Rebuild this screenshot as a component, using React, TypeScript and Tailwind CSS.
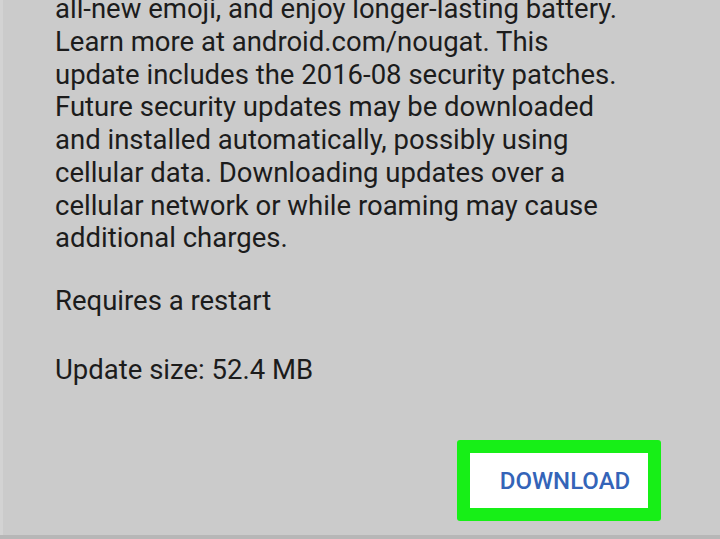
export default function App() {
  return (
    <div className="flex h-[539px] w-[720px] flex-col overflow-hidden bg-[#cbcbcb] font-['Roboto',sans-serif]">
      <div className="flex flex-1 flex-col border-l-[3px] border-[#d3d3d3] pl-[52px]">
        <div className="-mt-[7px] text-[27.5px] leading-[32.75px] text-[#1c1c1c]">
          <p>all-new emoji, and enjoy longer-lasting battery.</p>
          <p>Learn more at android.com/nougat. This</p>
          <p>update includes the 2016-08 security patches.</p>
          <p>Future security updates may be downloaded</p>
          <p>and installed automatically, possibly using</p>
          <p>cellular data. Downloading updates over a</p>
          <p>cellular network or while roaming may cause</p>
          <p>additional charges.</p>
          <p className="mt-[30px]">Requires a restart</p>
          <p className="mt-[36px]">Update size: 52.4 MB</p>
        </div>
        <div className="mt-auto mb-[14px] flex justify-end pr-[59px]">
          <div className="rounded-[3px] bg-[#17ef17] p-[13px]">
            <button
              type="button"
              className="flex h-[55px] w-[178px] items-center justify-center bg-white pl-3 text-[24px] font-medium text-[#3464b8]"
            >
              DOWNLOAD
            </button>
          </div>
        </div>
      </div>
      <div className="h-[4px] bg-[#b7b7b7]" />
    </div>
  );
}
